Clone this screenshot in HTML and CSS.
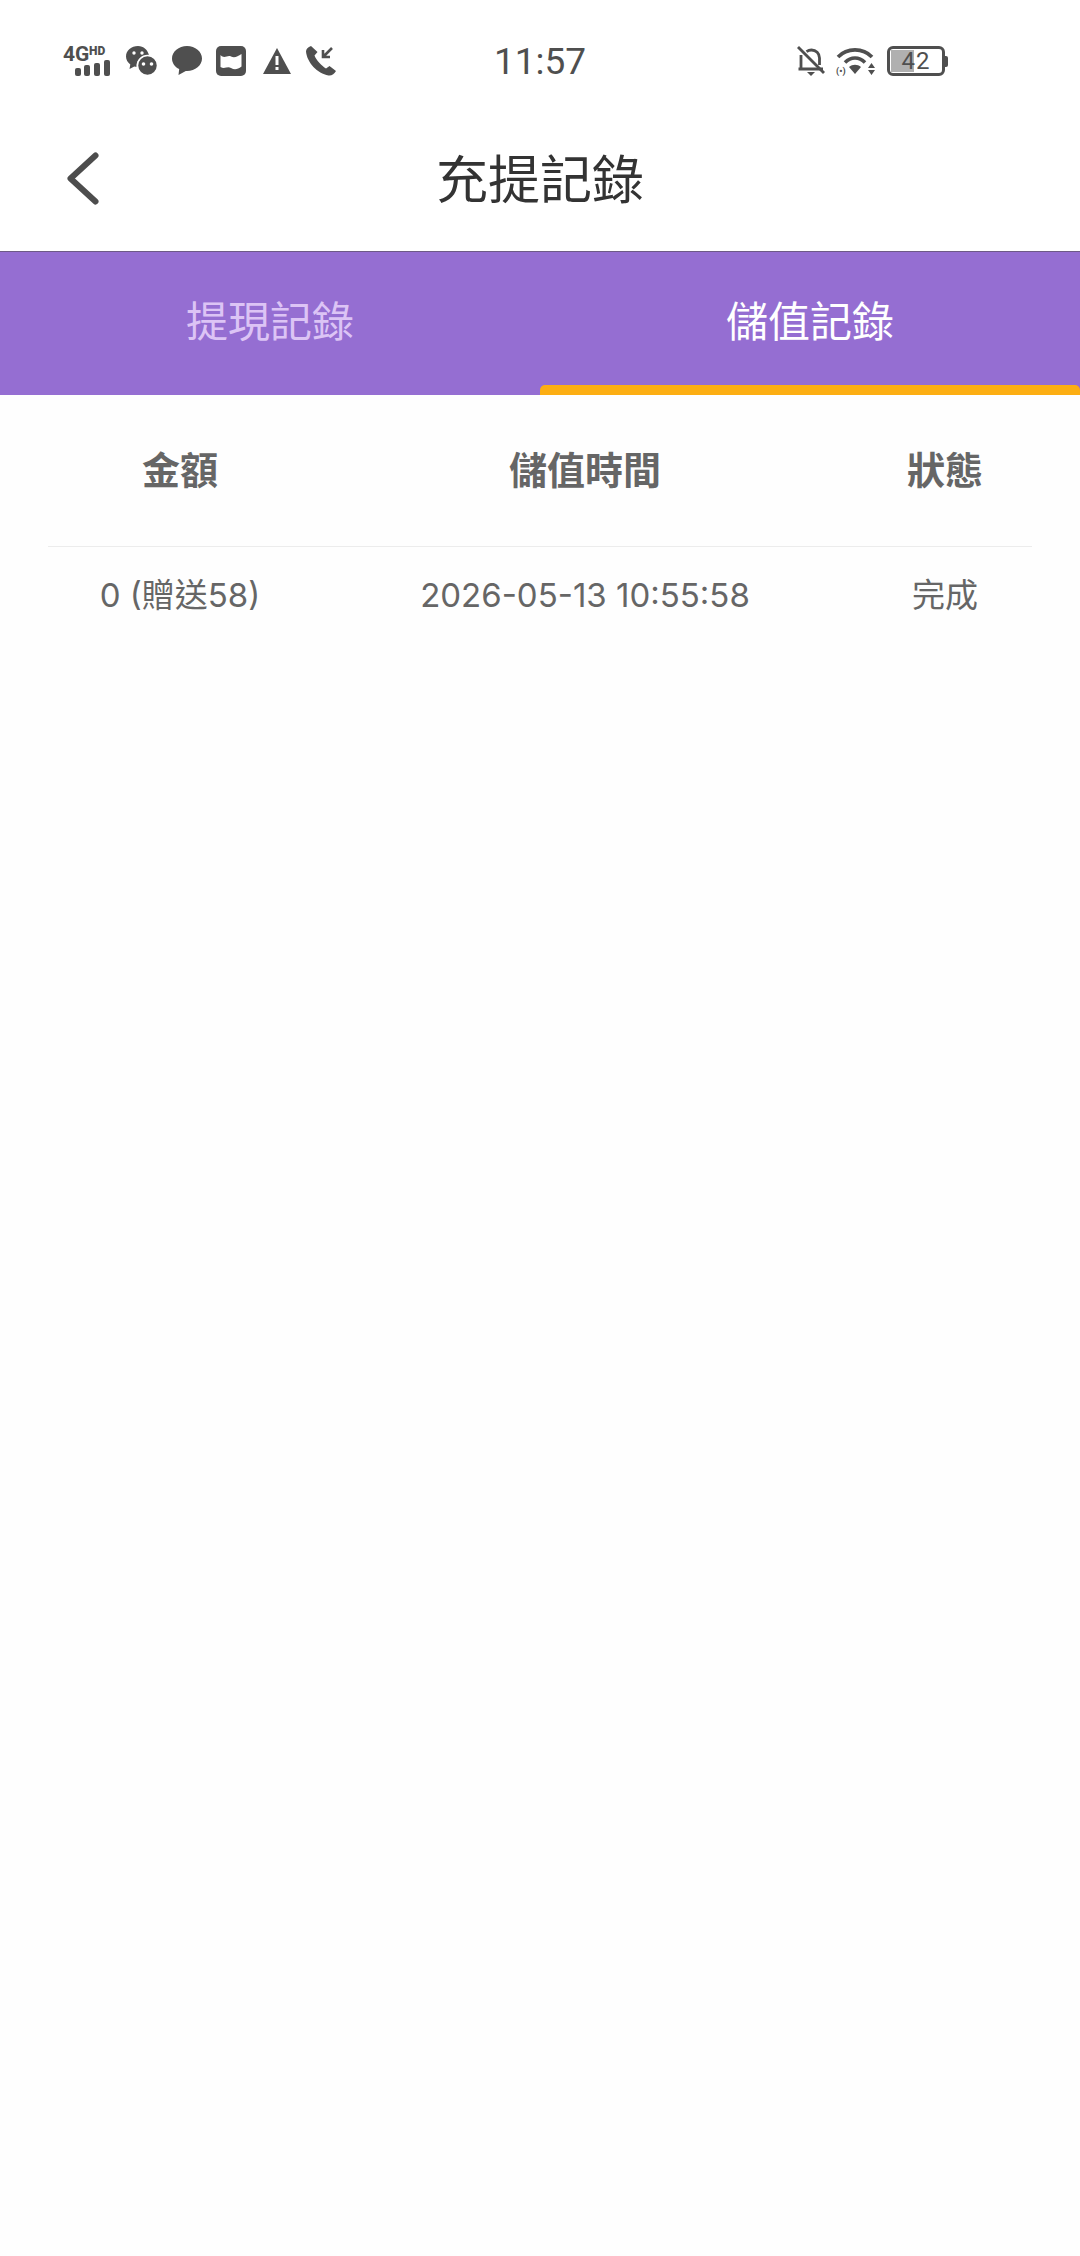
FILE: index.html
```html
<!DOCTYPE html>
<html lang="zh-Hant">
<head>
    <meta charset="UTF-8">
    <meta name="viewport" content="width=device-width, initial-scale=1.0">
    <title>充提記錄</title>
    <link rel="stylesheet" href="styles.css">
</head>
<body>
    <div class="status-bar">
        <div class="status-left">
            <svg class="ic-net" width="49" height="30" viewBox="0 0 49 30">
                <text x="0" y="15" class="net-4g">4G</text>
                <text x="26" y="9" class="net-hd">HD</text>
                <rect x="12" y="22" width="6" height="8" rx="2"/>
                <rect x="21" y="19" width="6" height="11" rx="2"/>
                <rect x="31" y="17" width="6" height="13" rx="2"/>
                <rect x="41" y="14" width="6" height="16" rx="2"/>
            </svg>
            <svg width="32" height="30" viewBox="0 0 32 30">
                <path d="M12 0C5.500 0 0 4.500 0 10.500c0 3.300 1.700 6 4.300 8L3.500 23l4.800-2.600c.8.200 1.500.3 2.300.4C10 14 15 9 23 9.500 22 4 17.500 0 12 0z"/>
                <circle cx="21.500" cy="19.500" r="10" stroke="#fff" stroke-width="1.500"/>
                <circle cx="8" cy="7" r="1.700" fill="#fff"/>
                <circle cx="16" cy="7" r="1.700" fill="#fff"/>
                <circle cx="17.500" cy="18" r="1.800" fill="#fff"/>
                <circle cx="25.500" cy="18" r="1.800" fill="#fff"/>
            </svg>
            <svg width="30" height="30" viewBox="0 0 30 30">
                <path d="M15 0C6.700 0 0 5.600 0 12.500c0 4.500 2.900 8.400 7.200 10.600L6.500 29l7.300-4h1.200c8.300 0 15-5.600 15-12.500S23.300 0 15 0z"/>
            </svg>
            <svg width="30" height="30" viewBox="0 0 30 30">
                <rect width="30" height="30" rx="5"/>
                <path d="M4.500 9c4 4.500 7-.5 10.500 1.500 3.500 2 6.500 0 10.500-2.500v12.500c-4 3-7 3.500-10.500 1.500-3.500-2-6.500 1.500-10.500-1z" fill="#fff"/>
            </svg>
            <svg class="ic-warn" width="28" height="26" viewBox="0 0 28 26">
                <path d="M14 0l14 26H0z"/>
                <rect x="12.500" y="8" width="3" height="9" fill="#fff"/>
                <rect x="12.500" y="19" width="3" height="3" fill="#fff"/>
            </svg>
            <svg class="ic-call" width="32" height="32" viewBox="0 0 32 32">
                <path d="M6 1C3 2 1 4 1 6.500c1 11 11.500 22 22.500 24 3 .5 6-1.500 7.500-4.500l-6.500-5-3.500 2.500C17 21 11 15 9.500 10.500L12.500 7z"/>
                <path d="M27 3l-8.500 8.500M18 5v7h7" fill="none" stroke="#4f4f4f" stroke-width="2.600"/>
            </svg>
        </div>
        <div class="status-time">11:57</div>
        <div class="status-right">
            <svg width="28" height="30" viewBox="0 0 28 30">
                <g fill="none" stroke="#4f4f4f" stroke-width="2.800">
                    <path d="M4 9v14H1.500M4 23h22M22.500 19v-7c0-4.500-3.500-8-8-8-2 0-3.500.6-5 1.700"/>
                    <path d="M1 1l26 26"/>
                </g>
                <path d="M10 26h8l-4 4z"/>
            </svg>
            <svg class="ic-wifi" width="40" height="28" viewBox="0 0 40 28">
                <g fill="none" stroke="#4f4f4f" stroke-width="3.600">
                    <path d="M2 10C11 .5 27 .5 36 10"/>
                    <path d="M9 15.500c6-6 14-6 20 0"/>
                </g>
                <path d="M13 20c3.500-3 8.500-3 12 0l-6 7z"/>
                <text x="0" y="27" class="wifi-e">(•)</text>
                <path d="M32 21l3.500-5 3.500 5zM32 23h7l-3.500 5z"/>
            </svg>
            <div class="battery">
                <div class="battery-fill"></div>
                <span class="battery-num">42</span>
            </div>
            <div class="battery-nub"></div>
        </div>
    </div>

    <header class="title-bar">
        <svg class="back" width="36" height="57" viewBox="0 0 36 57">
            <path d="M30.500 5.500L5.500 28.500l25 23" fill="none" stroke="#4d4d4d" stroke-width="6" stroke-linecap="round" stroke-linejoin="round"/>
        </svg>
        <h1 class="title">充提記錄</h1>
    </header>

    <nav class="tabs">
        <div class="tab">提現記錄</div>
        <div class="tab active">儲值記錄</div>
    </nav>

    <main class="records">
        <div class="row head">
            <div>金額</div>
            <div>儲值時間</div>
            <div>狀態</div>
        </div>
        <div class="row item">
            <div>0 (贈送58)</div>
            <div>2026-05-13 10:55:58</div>
            <div>完成</div>
        </div>
    </main>
</body>
</html>
```

FILE: styles.css
```css
html, body {
    margin: 0;
    height: 100%;
}
body {
    display: flex;
    flex-direction: column;
    background-color: #fefefe;
    font-family: "Noto Sans CJK TC", "Noto Sans", sans-serif;
    color: #666;
}

/* status bar */
.status-bar {
    height: 120px;
    display: grid;
    grid-template-columns: 1fr auto 1fr;
    align-items: center;
    background-color: #fff;
    color: #4f4f4f;
}
.status-bar svg {
    fill: #4f4f4f;
    display: block;
    overflow: visible;
}
.status-left {
    display: flex;
    align-items: center;
    gap: 14px;
    padding-left: 63px;
    padding-top: 2px;
}
.ic-warn {
    margin-left: 3px;
}
.status-time {
    width: 94px;
    text-align: center;
    font-family: "Roboto", sans-serif;
    font-size: 37px;
    padding-top: 2px;
}
.status-right {
    display: flex;
    align-items: center;
    padding-left: 210px;
    padding-top: 2px;
    gap: 11px;
}
.net-4g {
    font: 700 21px "Roboto", sans-serif;
}
.net-hd {
    font: 900 12px "Roboto", sans-serif;
}
.wifi-e {
    font: 700 9px "Roboto", sans-serif;
}
.battery {
    position: relative;
    box-sizing: border-box;
    width: 58px;
    height: 30px;
    padding: 1px;
    border: 3px solid #4f4f4f;
    border-radius: 6px;
}
.battery-fill {
    width: 23px;
    height: 100%;
    background-color: #b0b0b0;
}
.battery-num {
    position: absolute;
    inset: 0;
    text-align: center;
    line-height: 24px;
    font-family: "Roboto", sans-serif;
    font-size: 24px;
    letter-spacing: 1px;
}
.battery-nub {
    width: 3px;
    height: 11px;
    margin-left: -11px;
    background-color: #4f4f4f;
    border-radius: 0 2px 2px 0;
}

/* title */
.title-bar {
    position: relative;
    height: 112px;
    display: flex;
    align-items: center;
    justify-content: center;
    background-color: #fff;
    border-bottom: 1px solid #6d5a86;
    padding-bottom: 19px;
}
.back {
    position: absolute;
    left: 65px;
    top: 30px;
}
.title {
    margin: 0;
    font-size: 52px;
    font-weight: 400;
    color: #333;
}

/* tabs */
.tabs {
    height: 143px;
    display: flex;
    background-color: #956ed2;
}
.tab {
    position: relative;
    flex: 1;
    box-sizing: border-box;
    padding-top: 37px;
    text-align: center;
    font-size: 42px;
    line-height: 60px;
    color: #dcc4f5;
}
.tab.active {
    color: #fff;
}
.tab.active::after {
    content: "";
    position: absolute;
    left: 0;
    right: 0;
    bottom: 0;
    height: 10px;
    background-color: #fcae13;
    border-radius: 5px 5px 0 0;
}

/* table */
.records {
    flex: 1;
    padding: 0 48px;
}
.row {
    display: grid;
    grid-template-columns: 264px 546px 174px;
    text-align: center;
}
.head {
    height: 152px;
    padding-top: 44px;
    box-sizing: border-box;
    border-bottom: 1px solid #ececec;
    font-size: 38px;
    line-height: 58px;
    font-weight: 700;
}
.item {
    padding-top: 23px;
    font-family: "Inter", "Noto Sans CJK TC", sans-serif;
    font-size: 33px;
    line-height: 50px;
}
```
